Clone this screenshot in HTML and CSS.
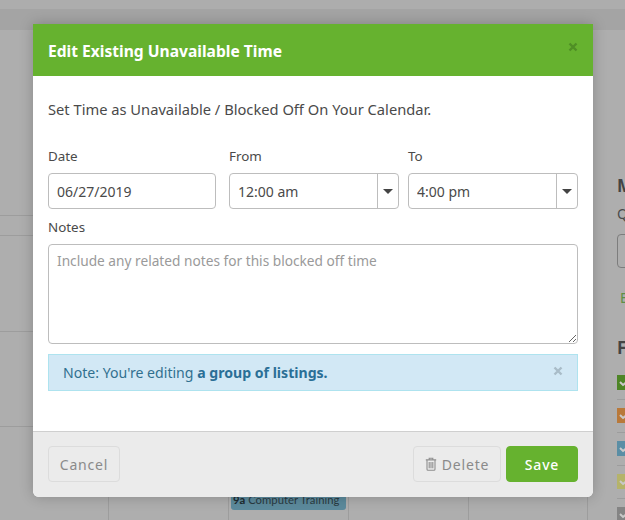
FILE: index.html
```html
<!DOCTYPE html>
<html lang="en">
<head>
<meta charset="utf-8">
<title>Edit Existing Unavailable Time</title>
<link rel="stylesheet" href="styles.css">
</head>
<body>
<div class="page">
  <div class="topbar"></div>
  <div class="subbar"></div>
  <div class="content">
    <div class="calendar">
      <div class="cal-row r1"></div>
      <div class="cal-row r2"></div>
      <div class="cal-row r3"></div>
      <div class="cal-row r4"></div>
      <div class="cal-cols">
        <div class="cal-col c1"></div>
        <div class="cal-col c2"></div>
        <div class="cal-col c3"><div class="event"><span><b>9a</b> Computer Training</span></div></div>
        <div class="cal-col c4"></div>
        <div class="cal-col c5"></div>
      </div>
    </div>
    <aside class="side">
      <div class="side-h">M</div>
      <div class="side-q">Q</div>
      <div class="side-box"></div>
      <div class="side-link">E</div>
      <div class="side-f">F</div>
      <div class="swatch s-green"><svg viewBox="0 0 15 15"><path d="M3 7l3 3 6-5"/></svg></div>
      <div class="swatch s-orange"><svg viewBox="0 0 15 15"><path d="M3 7l3 3 6-5"/></svg></div>
      <div class="swatch s-blue"><svg viewBox="0 0 15 15"><path d="M3 7l3 3 6-5"/></svg></div>
      <div class="swatch s-yellow"><svg viewBox="0 0 15 15"><path d="M3 7l3 3 6-5"/></svg></div>
      <div class="swatch s-gray"><svg viewBox="0 0 15 15"><path d="M3 7l3 3 6-5"/></svg></div>
    </aside>
  </div>
</div>

<div class="modal">
  <header class="modal-head">
    <h1>Edit Existing Unavailable Time</h1>
    <svg class="close" viewBox="0 0 10 10"><path d="M1.5 1.5l7 7M8.5 1.5l-7 7"/></svg>
  </header>
  <div class="modal-body">
    <p class="lead">Set Time as Unavailable / Blocked Off On Your Calendar.</p>
    <div class="row">
      <div class="field f-date">
        <label for="d">Date</label>
        <input id="d" class="control" type="text" value="06/27/2019">
      </div>
      <div class="field f-from">
        <label for="f">From</label>
        <div class="combo">
          <input id="f" type="text" value="12:00 am">
          <span class="arrow"></span>
        </div>
      </div>
      <div class="field">
        <label for="t">To</label>
        <div class="combo">
          <input id="t" type="text" value="4:00 pm">
          <span class="arrow"></span>
        </div>
      </div>
    </div>
    <label class="notes-label" for="n">Notes</label>
    <textarea id="n" class="notes" placeholder="Include any related notes for this blocked off time"></textarea>
    <div class="alert">
      <span>Note: You're editing <b>a group of listings.</b></span>
      <svg class="alert-x" viewBox="0 0 10 10"><path d="M1.5 1.5l7 7M8.5 1.5l-7 7"/></svg>
    </div>
  </div>
  <footer class="modal-foot">
    <button class="btn" type="button">Cancel</button>
    <span class="spacer"></span>
    <button class="btn btn-del" type="button">
      <svg class="trash" viewBox="0 0 12 14"><path d="M4.2 2.4V1.3h3.6v1.1M.8 2.9h10.4M2 3v9.3c0 .6.4 1 1 1h6c.6 0 1-.4 1-1V3M4.2 5v6.3M6 5v6.3M7.8 5v6.3"/></svg>
      Delete
    </button>
    <button class="btn btn-save" type="button">Save</button>
  </footer>
</div>
</body>
</html>
```

FILE: styles.css
```css
* { box-sizing: border-box; }
html, body { margin: 0; height: 100%; }
body {
  width: 625px;
  height: 520px;
  overflow: hidden;
  background: #aeaeae;
  font-family: "Noto Sans", "Lato", sans-serif;
  color: #4a4a4a;
  position: relative;
}

/* dimmed page behind the dialog */
.page { height: 520px; display: flex; flex-direction: column; }
.topbar { height: 9px; flex: none; background: #adadad; }
.subbar { height: 21px; flex: none; background: #a4a4a4; }
.content { flex: 1; min-height: 0; display: flex; overflow: hidden; }
.calendar { width: 588px; flex: none; position: relative; padding-top: 185px; }
.cal-row { border-bottom: 1px solid #9d9d9d; }
.r1 { height: 1px; }
.r2 { height: 20px; }
.r3 { height: 96px; }
.r4 { height: 95px; }
.cal-cols { position: absolute; left: 0; right: 0; top: 0; bottom: 0; display: flex; align-items: stretch; }
.cal-col { border-right: 1px solid #9d9d9d; width: 120px; position: relative; }
.cal-col.c1 { width: 109px; }
.cal-col.c5 { width: 119px; }
.event {
  position: absolute;
  left: 2px;
  right: 2px;
  top: 450px;
  height: 30px;
  background: #5c8a9c;
  border-radius: 0 0 3px 3px;
  color: #2a3a42;
  font-family: "Lato", sans-serif;
  font-size: 11.3px;
  line-height: 14px;
  padding: 0 0 3px 2px;
  white-space: nowrap;
  display: flex;
  align-items: flex-end;
}
.event b { color: #1d2a30; }

.side { width: 8px; flex: none; margin-left: 29px; overflow: hidden; padding-top: 146px; }
.side-h { font-size: 17px; font-weight: 700; line-height: 20px; color: #444; }
.side-q { font-size: 14px; line-height: 18px; margin-top: 9px; color: #4a4a4a; }
.side-box { width: 30px; height: 34px; border: 1px solid #7d7d7d; border-radius: 4px; margin-top: 11px; }
.side-link { font-size: 14px; line-height: 18px; margin-top: 21px; margin-left: 3px; color: #5f8f45; }
.side-f { font-size: 17px; font-weight: 700; line-height: 20px; margin-top: 31px; color: #444; }
.swatch { width: 15px; height: 15px; margin-bottom: 18px; position: relative; }
.side-f + .swatch { margin-top: 17px; }
.swatch svg { display: block; width: 15px; height: 15px; }
.swatch path { fill: none; stroke: #c9c9c9; stroke-width: 2; }
.swatch + .swatch::before {
  content: "";
  position: absolute;
  left: 0;
  width: 8px;
  top: -9px;
  border-top: 1px solid #9d9d9d;
}
.s-green { background: #4e8526; }
.s-orange { background: #b9793a; }
.s-blue { background: #5a8ea5; }
.s-yellow { background: #b5b36a; }
.s-gray { background: #848484; }

/* dialog */
.modal {
  position: absolute;
  left: 33px;
  top: 24px;
  width: 560px;
  height: 473px;
  background: #fff;
  border-radius: 0 0 6px 6px;
  box-shadow: 0 0 14px rgba(0, 0, 0, .22);
  display: flex;
  flex-direction: column;
}
.modal-head {
  height: 52px;
  background: #66b22f;
  padding: 1px 15px 0;
  display: flex;
  align-items: center;
  justify-content: space-between;
}
.modal-head h1 {
  margin: 0;
  font-size: 15.6px;
  font-weight: 700;
  color: #fff;
}
.close { width: 10px; height: 10px; margin-top: -7px; }
.close path { fill: none; stroke: #4f8f25; stroke-width: 2.4; }

.modal-body { flex: 1; padding: 23px 15px 0; }
.lead { margin: 0 0 27px; font-size: 14.7px; line-height: 20px; }
.row { display: grid; grid-template-columns: 181px 179px 170px; }
.f-date { padding-right: 13px; }
.f-from { padding-right: 9px; }
label { display: block; font-size: 13.4px; line-height: 20px; margin-bottom: 7px; }
.control, .combo {
  width: 100%;
  height: 36px;
  border: 1px solid #bdbdbd;
  border-radius: 4px;
  background: #fff;
}
input {
  font: inherit;
  font-size: 14px;
  color: #4a4a4a;
}
.control { padding: 0 8px; outline: none; }
.combo { display: flex; }
.combo input { flex: 1; min-width: 0; border: 0; padding: 0 8px; background: none; outline: none; }
.arrow {
  width: 21px;
  border-left: 1px solid #bdbdbd;
  display: flex;
  align-items: center;
  justify-content: center;
}
.arrow::after {
  content: "";
  border-left: 5px solid transparent;
  border-right: 5px solid transparent;
  border-top: 5px solid #444;
}
.notes-label { margin: 8px 0 7px; }
.notes {
  display: block;
  width: 100%;
  height: 100px;
  border: 1px solid #bdbdbd;
  border-radius: 4px;
  padding: 6px 8px;
  font: inherit;
  font-size: 13.7px;
  color: #4a4a4a;
  outline: none;
}
.notes::placeholder { color: #9a9a9a; opacity: 1; }
.alert {
  margin-top: 10px;
  height: 37px;
  background: #d2e8f5;
  border: 1px solid #aee3ef;
  padding: 0 14px;
  display: flex;
  align-items: center;
  justify-content: space-between;
  font-size: 14.1px;
  color: #31708f;
}
.alert b { color: #2a6f96; }
.alert-x { width: 10px; height: 10px; margin-top: -4px; }
.alert-x path { fill: none; stroke: #a9bcc8; stroke-width: 2.4; }

.modal-foot {
  height: 66px;
  background: #ebebeb;
  border-top: 1px solid #cfcfcf;
  border-radius: 0 0 6px 6px;
  padding: 14px 15px 15px;
  display: flex;
}
.spacer { flex: 1; }
.btn {
  height: 36px;
  padding: 0;
  width: 72px;
  border: 1px solid #dcdcdc;
  border-radius: 4px;
  background: #ebebeb;
  color: #8a8a8a;
  font-family: inherit;
  font-size: 14px;
  letter-spacing: .8px;
}
.btn-del {
  width: 88px;
  display: flex;
  align-items: center;
  justify-content: center;
  gap: 5px;
  margin-right: 5px;
}
.trash { width: 12px; height: 14px; }
.trash path { fill: none; stroke: #8f8f8f; stroke-width: 1.1; }
.btn-save {
  background: #66b22f;
  border-color: #66b22f;
  color: #fff;
  font-weight: 500;
}
```
